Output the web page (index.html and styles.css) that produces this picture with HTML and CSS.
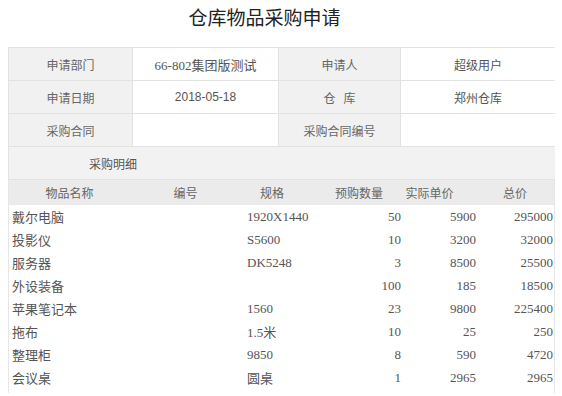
FILE: index.html
```html
<!DOCTYPE html>
<html lang="zh">
<head>
<meta charset="utf-8">
<link rel="stylesheet" href="styles.css">
</head>
<body>
<h1 class="title">仓库物品采购申请</h1>
<table class="info">
  <colgroup><col class="c1"><col class="c2"><col class="c3"><col class="c4"></colgroup>
  <tr>
    <td class="label">申请部门</td>
    <td class="value serif">66-802集团版测试</td>
    <td class="label">申请人</td>
    <td class="value">超级用户</td>
  </tr>
  <tr>
    <td class="label">申请日期</td>
    <td class="value sans">2018-05-18</td>
    <td class="label">仓&nbsp;&nbsp;&nbsp;库</td>
    <td class="value sans">郑州仓库</td>
  </tr>
  <tr>
    <td class="label">采购合同</td>
    <td class="value"></td>
    <td class="label">采购合同编号</td>
    <td class="value"></td>
  </tr>
  <tr>
    <td class="section" colspan="4">采购明细</td>
  </tr>
</table>
<div class="detail">
  <div class="row head">
    <div class="h">物品名称</div>
    <div class="h">编号</div>
    <div class="h h-spec">规格</div>
    <div class="h">预购数量</div>
    <div class="h h-price">实际单价</div>
    <div class="h h-total">总价</div>
  </div>
  <div class="row"><div class="name">戴尔电脑</div><div></div><div class="spec">1920X1440</div><div class="num q">50</div><div class="num p">5900</div><div class="num t">295000</div></div>
  <div class="row"><div class="name">投影仪</div><div></div><div class="spec">S5600</div><div class="num q">10</div><div class="num p">3200</div><div class="num t">32000</div></div>
  <div class="row"><div class="name">服务器</div><div></div><div class="spec">DK5248</div><div class="num q">3</div><div class="num p">8500</div><div class="num t">25500</div></div>
  <div class="row"><div class="name">外设装备</div><div></div><div class="spec"></div><div class="num q">100</div><div class="num p">185</div><div class="num t">18500</div></div>
  <div class="row"><div class="name">苹果笔记本</div><div></div><div class="spec">1560</div><div class="num q">23</div><div class="num p">9800</div><div class="num t">225400</div></div>
  <div class="row"><div class="name">拖布</div><div></div><div class="spec">1.5米</div><div class="num q">10</div><div class="num p">25</div><div class="num t">250</div></div>
  <div class="row"><div class="name">整理柜</div><div></div><div class="spec">9850</div><div class="num q">8</div><div class="num p">590</div><div class="num t">4720</div></div>
  <div class="row"><div class="name">会议桌</div><div></div><div class="spec">圆桌</div><div class="num q">1</div><div class="num p">2965</div><div class="num t">2965</div></div>
</div>
</body>
</html>
```
FILE: styles.css
```css
html, body {
  background: #ffffff;
}
body {
  margin: 0 7px 0 8px;
  font-family: "Liberation Serif", "Noto Sans CJK SC", serif;
  color: #555;
}
.title {
  margin: 0 0 14px 0;
  padding-right: 34px;
  height: 33px;
  line-height: 33px;
  text-align: center;
  font-family: "Noto Sans CJK SC", sans-serif;
  font-weight: 400;
  font-size: 19px;
  color: #222;
}
.info {
  width: 547px;
  border-collapse: collapse;
  table-layout: fixed;
  font-size: 12px;
}
.info .c1 { width: 124px; }
.info .c2 { width: 146px; }
.info .c3 { width: 122px; }
.info .c4 { width: 155px; }
.info td {
  height: 32px;
  padding: 0;
  border: 1px solid #e2e2e2;
  text-align: center;
  vertical-align: middle;
}
.label {
  background: #f1f1f1;
  color: #666;
  font-family: "Noto Sans CJK SC", sans-serif;
}
.value {
  background: #fff;
  color: #555;
  font-family: "Noto Sans CJK SC", sans-serif;
}
.value.serif {
  font-family: "Liberation Serif", "Noto Sans CJK SC", serif;
  font-size: 13px;
}
.value.sans {
  font-family: "Liberation Sans", "Noto Sans CJK SC", sans-serif;
}
.info td.section {
  background: #f2f2f2;
  text-align: left;
  padding-left: 80px;
  font-family: "Noto Sans CJK SC", sans-serif;
  color: #555;
}
.detail {
  width: 547px;
  border-left: 1px solid #e6e6e6;
  border-right: 1px solid #e6e6e6;
  box-sizing: border-box;
  padding-bottom: 4px;
}
.row {
  display: grid;
  grid-template-columns: 121px 111px 72px 92px 75px 74px;
  height: 23px;
  align-items: center;
  font-size: 13px;
}
.row.head {
  height: 25px;
  background: #ebebeb;
  font-size: 12px;
  color: #666;
  font-family: "Noto Sans CJK SC", sans-serif;
}
.h {
  text-align: center;
  white-space: nowrap;
}
.h-spec { padding-right: 10px; }
.h-price { padding-right: 26px; }
.h-total { padding-right: 4px; }
.name {
  padding-left: 3px;
}
.spec {
  padding-left: 6px;
}
.num {
  text-align: right;
}
.q { padding-right: 4px; }
.p { padding-right: 4px; }
.t { padding-right: 1px; }
```
